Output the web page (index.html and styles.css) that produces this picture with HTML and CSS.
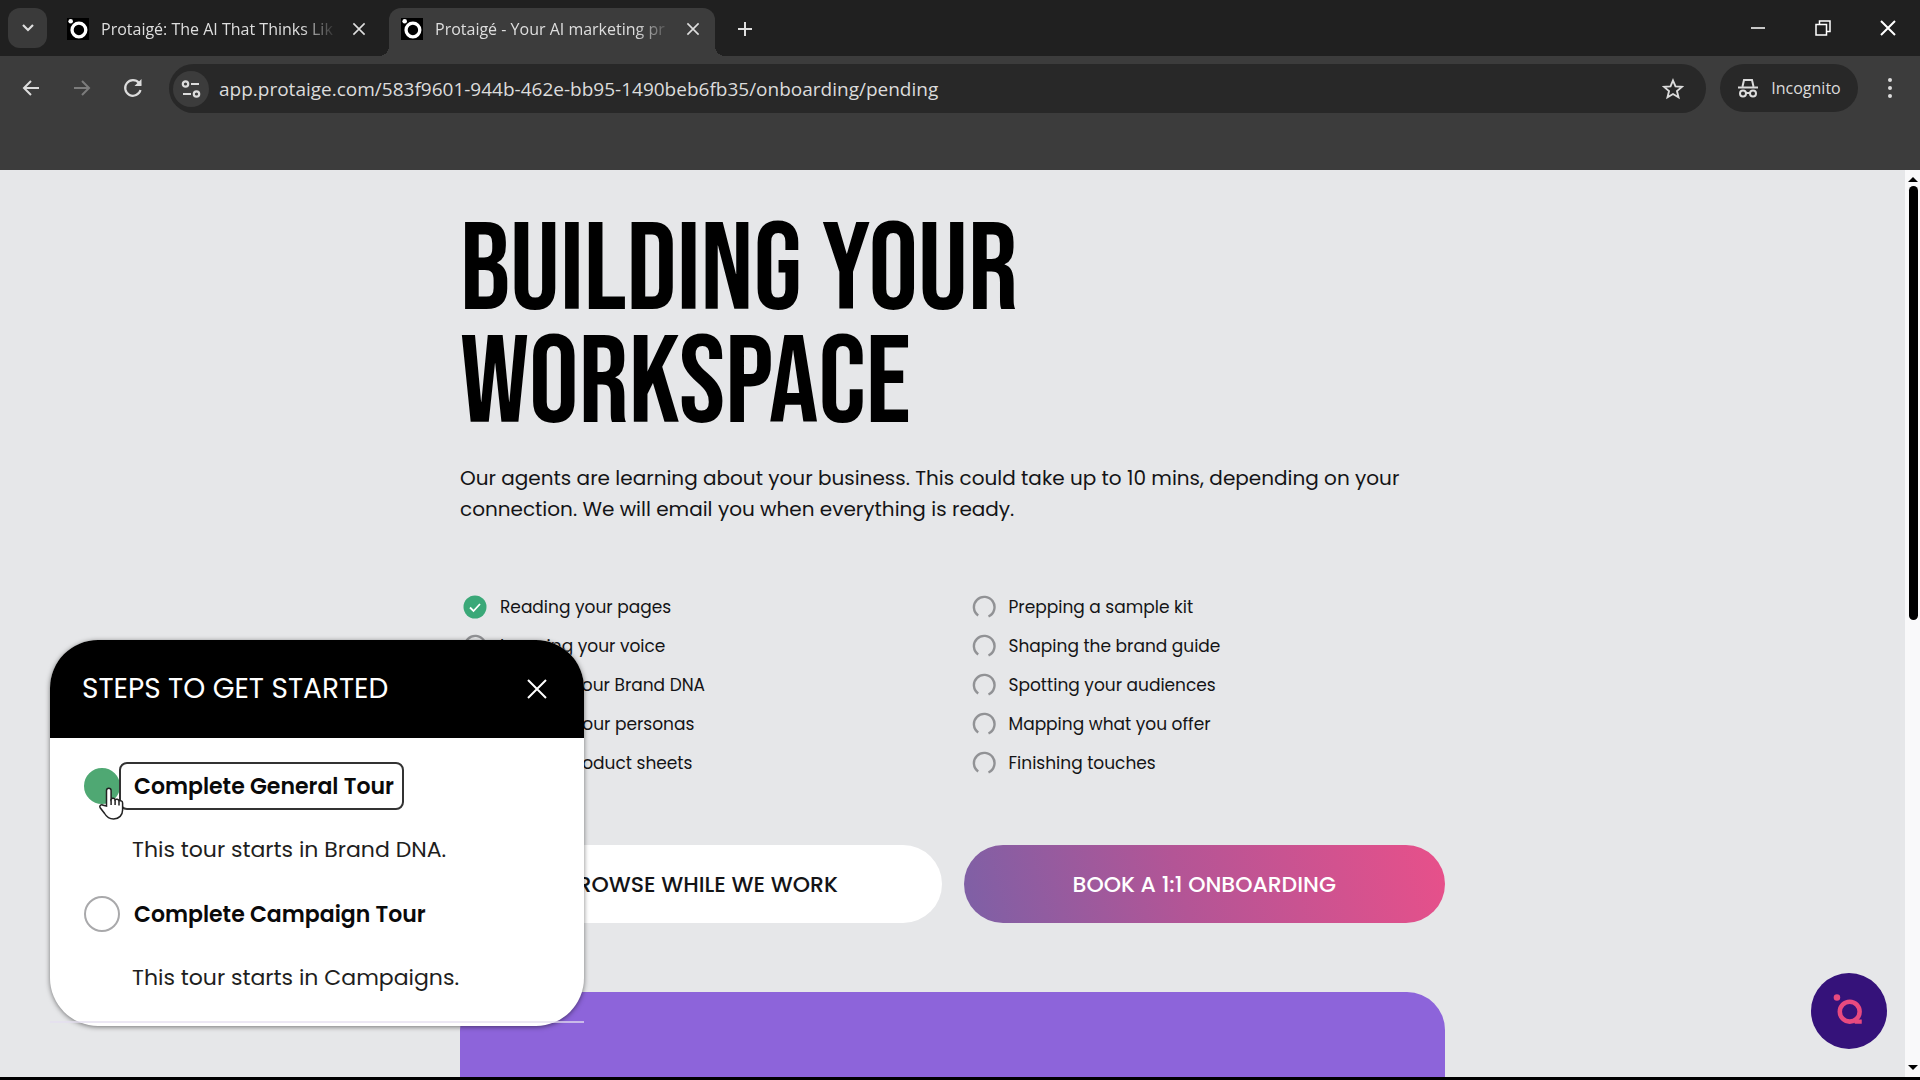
FILE: index.html
```html
<!DOCTYPE html>
<html lang="en">
<head>
<meta charset="utf-8">
<title>Protaigé - Your AI marketing partner</title>
<link rel="stylesheet" href="styles.css">
</head>
<body>
<svg class="defs" aria-hidden="true">
  <symbol id="logo" viewBox="1 1 24 24">
    <circle cx="13.500" cy="13.500" r="7" fill="none" stroke="currentColor" stroke-width="3.200"/>
    <circle cx="4.500" cy="3.500" r="2.300" fill="currentColor"/>
    <path d="M17 19h5v3h-5z" fill="currentColor"/>
  </symbol>
  <symbol id="mark" viewBox="0 0 24 24">
    <circle cx="13" cy="13" r="7.500" fill="none" stroke="currentColor" stroke-width="3.600"/>
    <circle cx="4" cy="3.500" r="2.500" fill="currentColor"/>
  </symbol>
  <symbol id="cross" viewBox="0 0 20 20"><path d="M3 3l14 14M17 3L3 17" fill="none" stroke="currentColor" stroke-width="2"/></symbol>
  <symbol id="spinner" viewBox="0 0 24 24"><path d="M6.200 20.500A10.300 10.300 0 1 1 16.500 21.500" fill="none" stroke="currentColor" stroke-width="2.400"/></symbol>
</svg>
<div class="browser">
  <header class="tabstrip">
    <button class="tab-search" aria-label="Search tabs"><svg width="14" height="10" viewBox="0 0 14 10"><path d="M2 2l5 5 5-5" fill="none" stroke="currentColor" stroke-width="2.200"/></svg></button>
    <div class="tab">
      <svg class="favicon"><use href="#mark"/></svg>
      <span class="tab-title">Protaigé: The AI That Thinks Lik</span>
      <button class="tab-close" aria-label="Close tab"><svg width="16" height="16"><use href="#cross"/></svg></button>
    </div>
    <div class="tab tab-active">
      <svg class="favicon"><use href="#mark"/></svg>
      <span class="tab-title">Protaigé - Your AI marketing pr</span>
      <button class="tab-close" aria-label="Close tab"><svg width="16" height="16"><use href="#cross"/></svg></button>
    </div>
    <button class="new-tab" aria-label="New tab"><svg width="18" height="18" viewBox="0 0 18 18"><path d="M9 2v14M2 9h14" stroke="currentColor" stroke-width="2"/></svg></button>
    <div class="window-controls">
      <button aria-label="Minimize"><svg width="16" height="16" viewBox="0 0 16 16"><path d="M1 8h14" stroke="currentColor" stroke-width="1.500"/></svg></button>
      <button aria-label="Restore"><svg width="16" height="16" viewBox="0 0 16 16"><path d="M1 4.500h10.500V15H1zM4.500 4V1H15v10.500h-3" fill="none" stroke="currentColor" stroke-width="1.500"/></svg></button>
      <button aria-label="Close"><svg width="20" height="20"><use href="#cross"/></svg></button>
    </div>
  </header>
  <nav class="toolbar">
    <button aria-label="Back"><svg width="20" height="20" viewBox="0 0 20 20"><path d="M18 10H3M10 3l-7 7 7 7" fill="none" stroke="currentColor" stroke-width="2"/></svg></button>
    <button class="is-off" aria-label="Forward"><svg width="20" height="20" viewBox="0 0 20 20"><path d="M2 10h15M10 3l7 7-7 7" fill="none" stroke="currentColor" stroke-width="2"/></svg></button>
    <button aria-label="Reload"><svg width="22" height="22" viewBox="0 0 22 22"><path d="M18.500 13a7.800 7.800 0 1 1-1.500-7l1.500 2" fill="none" stroke="currentColor" stroke-width="2.200"/><path d="M19.500 2v7h-7z" fill="currentColor"/></svg></button>
    <div class="omnibox">
      <button class="site-info" aria-label="Site information"><svg width="20" height="20" viewBox="0 0 20 20" fill="none" stroke="currentColor" stroke-width="2.200"><circle cx="4.500" cy="5" r="2.700"/><path d="M10 5h8M2 15h8"/><circle cx="15.500" cy="15" r="2.700"/></svg></button>
      <input class="url" aria-label="Address" value="app.protaige.com/583f9601-944b-462e-bb95-1490beb6fb35/onboarding/pending">
      <button class="star" aria-label="Bookmark"><svg width="22" height="22" viewBox="0 0 22 22"><path d="M11 2.500l2.500 5.900 6.400.5-4.900 4.200 1.500 6.200L11 16l-5.500 3.300L7 13.100 2.100 8.900l6.400-.5z" fill="none" stroke="currentColor" stroke-width="1.900"/></svg></button>
    </div>
    <button class="incognito"><svg width="22" height="22" viewBox="0 0 22 22" fill="none" stroke="currentColor" stroke-width="2"><path d="M5.500 9.500L7 3h8l1.500 6.500M1 10.500h20"/><circle cx="6" cy="16.500" r="3"/><circle cx="16" cy="16.500" r="3"/><path d="M9 16h4"/></svg>Incognito</button>
    <button class="menu" aria-label="Menu"><svg width="6" height="22" viewBox="0 0 6 22" fill="currentColor"><circle cx="3" cy="3" r="2"/><circle cx="3" cy="11" r="2"/><circle cx="3" cy="19" r="2"/></svg></button>
  </nav>
  <div class="viewport">
    <main class="page">
      <div class="content">
        <h1>Building your<br>workspace</h1>
        <p class="intro">Our agents are learning about your business. This could take up to 10 mins, depending on your connection. We will email you when everything is ready.</p>
        <div class="progress">
          <ul>
            <li><svg class="state" viewBox="0 0 24 24"><circle cx="12" cy="12" r="11.500" fill="#3aa878"/><path d="M7 12.500l3.500 3.500L17 9" fill="none" stroke="#fff" stroke-width="1.800"/></svg>Reading your pages</li>
            <li><svg class="state"><use href="#spinner"/></svg>Learning your voice</li>
            <li><svg class="state"><use href="#spinner"/></svg>Building your Brand DNA</li>
            <li><svg class="state"><use href="#spinner"/></svg>Drafting your personas</li>
            <li><svg class="state"><use href="#spinner"/></svg>Writing product sheets</li>
          </ul>
          <ul>
            <li><svg class="state"><use href="#spinner"/></svg>Prepping a sample kit</li>
            <li><svg class="state"><use href="#spinner"/></svg>Shaping the brand guide</li>
            <li><svg class="state"><use href="#spinner"/></svg>Spotting your audiences</li>
            <li><svg class="state"><use href="#spinner"/></svg>Mapping what you offer</li>
            <li><svg class="state"><use href="#spinner"/></svg>Finishing touches</li>
          </ul>
        </div>
        <div class="actions">
          <button class="action">Browse while we work</button>
          <button class="action action-primary">Book a 1:1 onboarding</button>
        </div>
        <section class="promo"></section>
      </div>
    </main>
    <div class="scrollbar">
      <svg width="10" height="6" viewBox="0 0 10 6"><path d="M0 6l5-5 5 5z"/></svg>
      <div class="thumb"></div>
      <svg class="scroll-down" width="10" height="6" viewBox="0 0 10 6"><path d="M0 0l5 5 5-5z"/></svg>
    </div>
    <aside class="steps">
      <div class="steps-head">
        <h2>Steps to get started</h2>
        <button aria-label="Close"><svg width="26" height="26" viewBox="0 0 26 26"><path d="M4 4l18 18M22 4L4 22" stroke="currentColor" stroke-width="2"/></svg></button>
      </div>
      <div class="steps-body">
        <div class="step">
          <input type="checkbox" id="general" checked><label class="focused" for="general">Complete General Tour</label>
        </div>
        <p>This tour starts in Brand DNA.</p>
        <div class="step">
          <input type="checkbox" id="campaign"><label for="campaign">Complete Campaign Tour</label>
        </div>
        <p>This tour starts in Campaigns.</p>
      </div>
      <svg class="pointer" viewBox="0 0 26 34"><path d="M8.500 20V4.500a2.300 2.300 0 0 1 4.600 0V13c.8-1.300 3.700-1 4 .8 1-1 3.600-.7 3.900 1.200 1.300-.7 3.600-.2 3.600 2v7c0 5-3.500 9-9 9-4.500 0-7-2-9-5.500L2 21.500c-1-2 1.500-3.700 3.300-2.200z" fill="#fff" stroke="#222" stroke-width="1.500"/><path d="M13.100 13v6M17.100 14v5M21 15.500v4" stroke="#222" stroke-width="1.500"/></svg>
    </aside>
    <button class="assistant" aria-label="Open assistant"><svg width="34" height="34"><use href="#logo"/></svg></button>
  </div>
</div>
</body>
</html>
```
FILE: styles.css
```css
* { box-sizing: border-box; }
body { margin: 0; background: #000; font-family: Poppins, Inter, "Liberation Sans", sans-serif; color: #141416; }
button { border: 0; padding: 0; background: none; color: inherit; font: inherit; display: flex; align-items: center; justify-content: center; }
.defs { position: absolute; width: 0; height: 0; }

.browser { height: 100vh; display: flex; flex-direction: column; border-bottom: 3px solid #000; overflow: hidden; }

.tabstrip { display: flex; align-items: stretch; height: 56px; padding: 8px 0 0 8px; background: #202020; color: #dedede; font: 16px "Segoe UI", "Open Sans", "Noto Sans", sans-serif; }
.tab-search { width: 39px; height: 40px; border-radius: 12px; background: #3a3a3a; }
.tab { display: flex; align-items: center; gap: 12px; width: 326px; margin-left: 8px; padding: 0 12px 7px; }
.tab-active { position: relative; background: #3c3c3c; border-radius: 12px 12px 0 0; }
.tab-active::before, .tab-active::after { content: ""; position: absolute; bottom: 0; width: 10px; height: 10px; }
.tab-active::before { left: -10px; background: radial-gradient(circle at 0 0, transparent 10px, #3c3c3c 10px); }
.tab-active::after { right: -10px; background: radial-gradient(circle at 100% 0, transparent 10px, #3c3c3c 10px); }
.favicon { width: 22px; height: 22px; flex: none; background: #000; color: #fff; }
.tab-title { flex: 1; white-space: nowrap; mask-image: linear-gradient(90deg, #000 85%, transparent); }
.tab-close { width: 20px; height: 20px; }
.new-tab { width: 40px; margin-left: 10px; padding-bottom: 7px; }
.window-controls { display: flex; margin-left: auto; padding-bottom: 8px; color: #fff; }
.window-controls button { width: 65px; }

.toolbar { display: flex; align-items: flex-start; height: 114px; padding: 8px 18px 8px 16px; background: #3c3c3c; color: #dcdcdc; }
.toolbar > button { height: 48px; width: 30px; margin-right: 21px; }
.toolbar > .is-off { color: #7c7c7c; }
.omnibox { flex: 1; display: flex; align-items: center; height: 49px; padding: 0 22px 0 4px; border-radius: 25px; background: #282828; }
.site-info { width: 36px; height: 36px; border-radius: 18px; background: #3c3c3c; }
.url { flex: 1; border: 0; padding: 0 10px; background: none; color: #dcdcdc; font: 19px "Segoe UI", "Open Sans", "Noto Sans", sans-serif; }
.toolbar > .incognito { width: 138px; gap: 12px; margin: 0 20px 0 14px; border-radius: 25px; background: #282828; font: 16px "Segoe UI", "Open Sans", "Noto Sans", sans-serif; }
.toolbar > .menu { width: 24px; margin: 0; }

.viewport { flex: 1; min-height: 0; display: flex; position: relative; background: #e6e7e9; }
.page { flex: 1; overflow: hidden; }
.content { width: 100%; max-width: 985px; margin: 0 auto; padding-top: 45px; }
h1 { margin: 0; font: 400 124px/113px "Bebas Neue", "Liberation Sans Narrow", "Liberation Sans", sans-serif; color: #000; text-transform: uppercase; }
.intro { margin: 22px 0 62px; font-size: 20px; line-height: 31px; }
.progress { display: grid; grid-template-columns: 1fr 1fr; gap: 32px; }
.progress ul { margin: 0; padding: 0 3px; list-style: none; font-size: 17px; }
.progress li { display: flex; align-items: center; gap: 13px; height: 39px; }
.state { width: 24px; height: 24px; flex: none; color: #919295; }
.actions { display: grid; grid-template-columns: 1fr 1fr; gap: 22px; margin-top: 63px; }
.action { height: 78px; border-radius: 39px; background: #fff; font-size: 22px; font-weight: 500; text-transform: uppercase; }
.action-primary { color: #fff; background: linear-gradient(75deg, #7d60a6, #b35596 45%, #e8508a); }
.promo { height: 480px; margin-top: 69px; border-radius: 38px; background: #8d64da; }

.scrollbar { width: 15px; display: flex; flex-direction: column; align-items: center; padding: 6px 0 6px 1px; background: #f9f9fa; }
.thumb { width: 9px; height: 434px; margin-top: 4px; border-radius: 5px; background: #000; }
.scroll-down { margin-top: auto; }

.steps { position: absolute; left: 50px; bottom: 51px; width: 534px; border-radius: 48px; background: #fff; box-shadow: 0 1px 5px rgba(0, 0, 0, .5); color: #1e1e20; }
.steps::after { content: ""; position: absolute; left: 0; right: 0; bottom: 3px; height: 2px; background: rgba(228, 222, 240, .7); }
.steps-head { display: flex; align-items: center; justify-content: space-between; height: 98px; padding: 0 34px 0 32px; border-radius: 48px 48px 0 0; background: #000; color: #fff; }
h2 { margin: 0; font-size: 28px; font-weight: 400; text-transform: uppercase; }
.steps-body { padding: 24px 32px 32px; }
.step { display: flex; align-items: center; height: 48px; }
.step input { appearance: none; width: 36px; height: 36px; margin: 0 -1px 0 2px; border: 2px solid #a9a9ab; border-radius: 50%; background: #fff; }
.step input:checked { border-color: #4fa873; background: #4fa873; }
.step label { padding: 9px 8px 7px 13px; border: 2px solid transparent; border-radius: 8px; font-size: 22px; font-weight: 600; line-height: 28px; color: #0a0a0a; }
.step .focused { border-color: #333; }
.steps-body p { margin: 24px 0 24px 50px; font-size: 22px; line-height: 32px; }
.steps-body p:last-child { margin-bottom: 0; }
.pointer { position: absolute; left: 48px; top: 146px; width: 26px; height: 34px; }
.assistant { position: absolute; right: 33px; bottom: 28px; width: 76px; height: 76px; border-radius: 50%; background: #35127a; color: #e84a7f; }
```
